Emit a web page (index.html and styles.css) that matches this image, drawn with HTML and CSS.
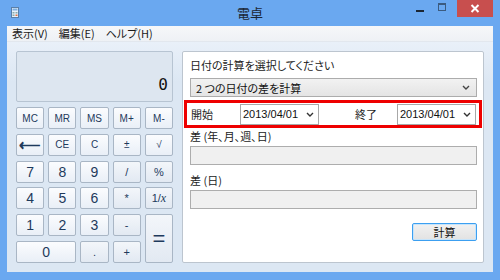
FILE: index.html
```html
<!DOCTYPE html>
<html>

<head>
    <link rel="stylesheet" href="styles.css">
</head>

<body>
    <div class="window">
        <div class="titlebar">
            <svg class="app-icon" width="8" height="11" viewBox="0 0 8 11">
                <rect x="0.5" y="0.5" width="7" height="10" fill="#e8f1fb" stroke="#5a7fa8"/>
                <rect x="1.5" y="1.5" width="5" height="2" fill="#7fb0e0"/>
                <rect x="1.5" y="5" width="2" height="1.5" fill="#8aa"/>
                <rect x="4.5" y="5" width="2" height="1.5" fill="#8aa"/>
                <rect x="1.5" y="7.5" width="2" height="1.5" fill="#8aa"/>
                <rect x="4.5" y="7.5" width="2" height="1.5" fill="#e07040"/>
            </svg>
            <div class="title">電卓</div>
            <div class="controls">
                <div class="ctl min"><span></span></div>
                <div class="ctl max"><span></span></div>
                <div class="ctl close">
                    <svg width="10" height="9" viewBox="0 0 10 9">
                        <path d="M1.5 1 L8.5 8 M8.5 1 L1.5 8" stroke="#fff" stroke-width="2"/>
                    </svg>
                </div>
            </div>
        </div>

        <div class="client">
            <div class="menubar">
                <span>表示(V)</span>
                <span>編集(E)</span>
                <span>ヘルプ(H)</span>
            </div>

            <div class="content">
                <div class="calc">
                    <div class="display">0</div>
                    <div class="keys">
                        <button class="key small">MC</button>
                        <button class="key small">MR</button>
                        <button class="key small">MS</button>
                        <button class="key small">M+</button>
                        <button class="key small">M-</button>

                        <button class="key arrow">⟵</button>
                        <button class="key small">CE</button>
                        <button class="key small">C</button>
                        <button class="key small">±</button>
                        <button class="key small">√</button>

                        <button class="key">7</button>
                        <button class="key">8</button>
                        <button class="key">9</button>
                        <button class="key op">/</button>
                        <button class="key op">%</button>

                        <button class="key">4</button>
                        <button class="key">5</button>
                        <button class="key">6</button>
                        <button class="key op">*</button>
                        <button class="key op">1/<i>x</i></button>

                        <button class="key">1</button>
                        <button class="key">2</button>
                        <button class="key">3</button>
                        <button class="key op">-</button>
                        <button class="key equals">=</button>

                        <button class="key zero">0</button>
                        <button class="key op">.</button>
                        <button class="key op">+</button>
                    </div>
                </div>

                <div class="panel">
                    <div class="label first">日付の計算を選択してください</div>
                    <div class="select wide">
                        <span>2 つの日付の差を計算</span>
                        <svg width="8" height="5" viewBox="0 0 8 5"><path d="M1 1 L4 4 L7 1" stroke="#444" stroke-width="1.4" fill="none"/></svg>
                    </div>

                    <div class="date-row">
                        <span class="date-label">開始</span>
                        <div class="date-input">
                            <span>2013/04/01</span>
                            <svg width="8" height="5" viewBox="0 0 8 5"><path d="M1 1 L4 4 L7 1" stroke="#333" stroke-width="1.4" fill="none"/></svg>
                        </div>
                        <span class="date-label end">終了</span>
                        <div class="date-input">
                            <span>2013/04/01</span>
                            <svg width="8" height="5" viewBox="0 0 8 5"><path d="M1 1 L4 4 L7 1" stroke="#333" stroke-width="1.4" fill="none"/></svg>
                        </div>
                    </div>

                    <div class="label">差 (年、月、週、日)</div>
                    <div class="result"></div>

                    <div class="label">差 (日)</div>
                    <div class="result"></div>

                    <div class="actions">
                        <button class="calc-btn">計算</button>
                    </div>
                </div>
            </div>
        </div>
    </div>
</body>

</html>
```

FILE: styles.css
```css
body {
    margin: 0;
    font-family: "Noto Sans CJK JP", "Noto Sans", sans-serif;
    font-size: 11px;
    font-feature-settings: "palt";
    color: #1e1e1e;
}

.window {
    width: 500px;
    height: 280px;
    background-color: #6aa8f0;
    display: flex;
    flex-direction: column;
}

/* title bar */
.titlebar {
    height: 26px;
    display: flex;
    align-items: flex-start;
    position: relative;
}

.app-icon {
    margin: 7px 0 0 11px;
}

.title {
    position: absolute;
    left: 0;
    right: 0;
    top: 4px;
    text-align: center;
    font-size: 13px;
    line-height: 18px;
    color: #1b2634;
}

.controls {
    margin-left: auto;
    margin-right: 7px;
    display: flex;
}

.ctl {
    height: 17px;
    display: flex;
    align-items: center;
    justify-content: center;
}

.min {
    width: 22px;
}

.min span {
    width: 8px;
    height: 2px;
    background: #1b2634;
    margin-top: 5px;
}

.max {
    width: 22px;
    margin-right: 4px;
}

.max span {
    width: 6px;
    height: 5px;
    border: 1px solid #3b5b80;
    border-top-width: 2px;
    margin-top: -4px;
}

.close {
    width: 36px;
    background-color: #c84f4e;
}

/* client area */
.client {
    margin: 0 7px 8px 7px;
    flex: 1;
    display: flex;
    flex-direction: column;
    background-color: #dfe9f5;
}

.menubar {
    height: 15px;
    background: linear-gradient(#f6f7f9, #eef1f5);
    border-bottom: 1px solid #e2e7ee;
    display: flex;
    gap: 11px;
    padding-left: 5px;
    line-height: 15px;
    font-size: 11px;
    color: #1a1a1a;
}

.content {
    flex: 1;
    display: flex;
    gap: 9px;
    padding: 9px 9px 0 9px;
    background: linear-gradient(#e9f0f9, #dce7f3 40px);
}

/* calculator */
.calc {
    width: 157px;
    display: flex;
    flex-direction: column;
}

.display {
    height: 51px;
    box-sizing: border-box;
    border: 1px solid #b7c4d2;
    border-radius: 2px;
    background-color: #dde6f0;
    text-align: right;
    font-family: "DejaVu Sans Mono", monospace;
    font-size: 16px;
    line-height: 18px;
    padding: 24px 4px 0 0;
    color: #111;
}

.keys {
    margin-top: 5px;
    display: grid;
    grid-template-columns: repeat(5, 1fr);
    grid-template-rows: repeat(6, 22px);
    column-gap: 4px;
    row-gap: 4.8px;
}

.key {
    margin: 0;
    padding: 0;
    border: 1px solid #a9b6c5;
    border-radius: 2px;
    background: linear-gradient(#fbfcfe, #e9eff7);
    font-family: "Liberation Sans", sans-serif;
    font-size: 14px;
    color: #1e3a5c;
    cursor: pointer;
}

.key.small {
    font-size: 10px;
}

.key.op {
    font-size: 11px;
    background: linear-gradient(#f3f6fa, #e2e9f2);
}

.key.arrow {
    font-size: 15px;
    font-weight: bold;
    line-height: 1;
}

.key i {
    font-family: "Liberation Serif", serif;
    font-size: 12px;
}

.key.equals {
    grid-row: span 2;
    font-size: 22px;
    background: linear-gradient(#f3f6fa, #e2e9f2);
}

.key.zero {
    grid-column: span 2;
}

/* date panel */
.panel {
    width: 302px;
    height: 212px;
    box-sizing: border-box;
    background-color: #ffffff;
    border: 1px solid #bcc5cf;
    border-radius: 2px;
    padding: 0 6px 0 7px;
    display: flex;
    flex-direction: column;
}

.label {
    font-size: 11px;
    line-height: 16px;
    color: #222;
}

.label.first {
    margin-top: 5px;
}

.select {
    margin-top: 5px;
    height: 19px;
    box-sizing: border-box;
    border: 1px solid #acacac;
    background: linear-gradient(#f2f2f2, #e4e4e4);
    display: flex;
    align-items: center;
    justify-content: space-between;
    padding: 0 6px 0 5px;
    font-size: 11px;
    color: #111;
}

.date-row {
    margin: 3px -5px 0 -6px;
    height: 28px;
    box-sizing: border-box;
    border: 3px solid #ee0000;
    display: flex;
    align-items: center;
    padding-left: 4px;
}

.date-label {
    width: 49px;
    font-size: 11px;
}

.date-label.end {
    width: 42px;
    margin-left: 36px;
}

.date-input {
    width: 79px;
    height: 21px;
    box-sizing: border-box;
    border: 1px solid #a8a8a8;
    display: flex;
    align-items: center;
    justify-content: space-between;
    padding: 0 4px 0 2px;
    font-family: "Liberation Sans", sans-serif;
    font-size: 11px;
    color: #111;
}

.result {
    margin-top: 2px;
    height: 19px;
    box-sizing: border-box;
    border: 1px solid #adadad;
    background-color: #f0f0f0;
}

.result + .label {
    margin-top: 7px;
}

.actions {
    margin-top: 14px;
    display: flex;
    justify-content: flex-end;
}

.calc-btn {
    width: 65px;
    height: 18px;
    margin: 0;
    padding: 0;
    border: 1px solid #3c9ff0;
    border-radius: 2px;
    background: linear-gradient(#f1f1f1, #e2e2e2);
    font-family: "Noto Sans CJK JP", sans-serif;
    font-size: 11px;
    line-height: 14px;
    color: #111;
    box-shadow: inset 0 0 0 1px #c6e4fb;
}
```
